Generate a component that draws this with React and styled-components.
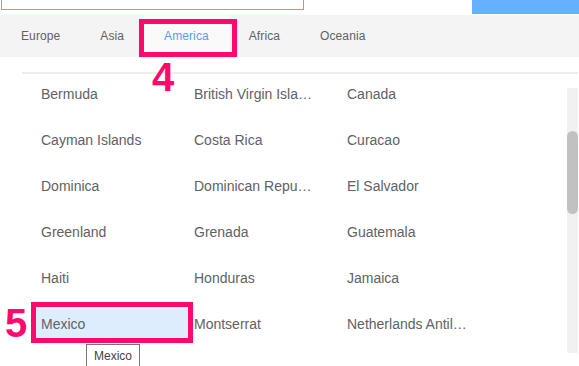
import styled, { createGlobalStyle } from "styled-components";

const GlobalStyle = createGlobalStyle`
  body {
    margin: 0;
    background: #fff;
    font-family: "Liberation Sans", Arial, sans-serif;
  }
`;

const Wrapper = styled.div`
  position: relative;
  width: 579px;
  height: 366px;
  overflow: hidden;
  background: #fff;
`;

const TopStrip = styled.div`
  display: flex;
  justify-content: space-between;
  height: 15px;
`;

const SearchInput = styled.div`
  width: 301px;
  height: 9px;
  margin-left: 1px;
  border: 1px solid #f08080;
  border-top: none;
`;

const SearchButton = styled.div`
  width: 107px;
  height: 14px;
  background: #66b1ff;
`;

const TabBar = styled.div`
  display: flex;
  align-items: stretch;
  height: 42px;
  padding-left: 1px;
  background: #f4f4f4;
`;

const Tab = styled.div`
  display: flex;
  align-items: center;
  padding: 0 20px;
  font-size: 12px;
  letter-spacing: 0.1px;
  color: ${(p) => (p.$active ? "#5b9cf0" : "#606266")};
  background: ${(p) => (p.$active ? "#fafafa" : "transparent")};
`;

const Panel = styled.div`
  padding: 15px 1px 0 22px;
`;

const Divider = styled.div`
  height: 2px;
  background: #ededed;
`;

const Body = styled.div`
  display: flex;
`;

const List = styled.div`
  flex: 1;
  display: grid;
  grid-template-columns: repeat(3, 152px);
  column-gap: 1px;
  row-gap: 16px;
  align-content: start;
  padding: 5px 0 0 14px;
`;

const Item = styled.div`
  position: relative;
  height: 30px;
  line-height: 30px;
  padding: 0 25px 0 5px;
  font-size: 14px;
  color: #606266;
  white-space: nowrap;
  overflow: ${(p) => (p.$hover ? "visible" : "hidden")};
  text-overflow: ellipsis;
  background: ${(p) => (p.$hover ? "#ddedfd" : "transparent")};
`;

const Tooltip = styled.div`
  position: absolute;
  left: 50px;
  top: 35px;
  padding: 0 7px;
  height: 24px;
  line-height: 22px;
  font-size: 12px;
  color: #444;
  background: #fff;
  border: 1px solid #767676;
`;

const ScrollTrack = styled.div`
  width: 11px;
  height: 265px;
  margin-top: 14px;
  background: #f1f1f1;
`;

const ScrollThumb = styled.div`
  width: 11px;
  height: 83px;
  margin-top: 43px;
  border-radius: 6px;
  background: #c1c1c1;
`;

const Mark = styled.div`
  position: absolute;
  left: ${(p) => p.$x}px;
  top: ${(p) => p.$y}px;
  width: ${(p) => p.$w}px;
  height: ${(p) => p.$h}px;
  border: 5px solid #ff0a6c;
  box-sizing: border-box;
`;

const Step = styled.div`
  position: absolute;
  left: ${(p) => p.$x}px;
  top: ${(p) => p.$y}px;
  font-size: 40px;
  font-weight: 700;
  line-height: 40px;
  color: #ff0a6c;
`;

const tabs = ["Europe", "Asia", "America", "Africa", "Oceania"];

const countries = [
  "Bermuda", "British Virgin Islands", "Canada",
  "Cayman Islands", "Costa Rica", "Curacao",
  "Dominica", "Dominican Republic", "El Salvador",
  "Greenland", "Grenada", "Guatemala",
  "Haiti", "Honduras", "Jamaica",
  "Mexico", "Montserrat", "Netherlands Antilles",
];

const App = () => {
  return (
    <>
      <GlobalStyle />
      <Wrapper>
        <TopStrip>
          <SearchInput />
          <SearchButton />
        </TopStrip>
        <TabBar>
          {tabs.map((tab) => (
            <Tab key={tab} $active={tab === "America"}>{tab}</Tab>
          ))}
        </TabBar>
        <Panel>
          <Divider />
          <Body>
            <List>
              {countries.map((name) => (
                <Item key={name} $hover={name === "Mexico"}>
                  {name}
                  {name === "Mexico" && <Tooltip>Mexico</Tooltip>}
                </Item>
              ))}
            </List>
            <ScrollTrack>
              <ScrollThumb />
            </ScrollTrack>
          </Body>
        </Panel>
        <Mark $x={139} $y={19} $w={98} $h={38} />
        <Step $x={152} $y={57}>4</Step>
        <Mark $x={31} $y={302} $w={162} $h={41} />
        <Step $x={5} $y={303}>5</Step>
      </Wrapper>
    </>
  );
};

export default App;
